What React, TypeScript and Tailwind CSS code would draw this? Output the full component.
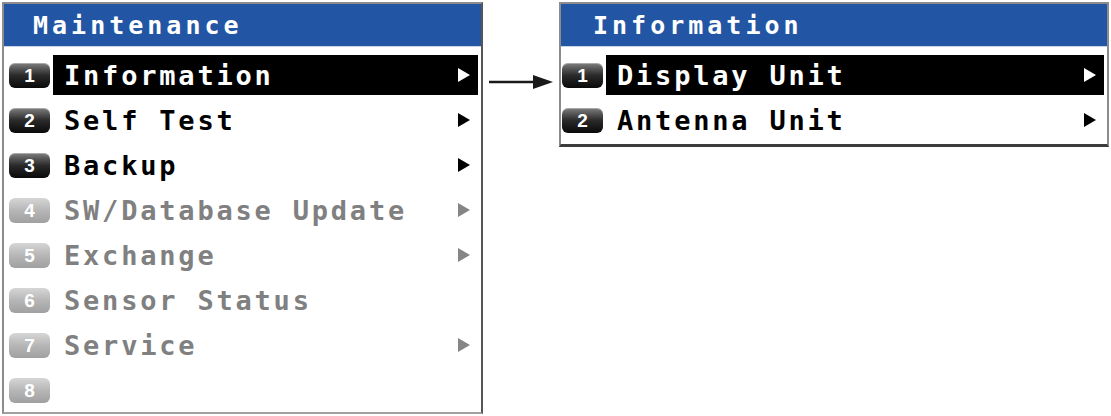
import React from "react";

type Item = { n: number; label: string; sub?: boolean; selected?: boolean; disabled?: boolean };

const mainItems: Item[] = [
  { n: 1, label: "Information", sub: true, selected: true },
  { n: 2, label: "Self Test", sub: true },
  { n: 3, label: "Backup", sub: true },
  { n: 4, label: "SW/Database Update", sub: true, disabled: true },
  { n: 5, label: "Exchange", sub: true, disabled: true },
  { n: 6, label: "Sensor Status", disabled: true },
  { n: 7, label: "Service", sub: true, disabled: true },
  { n: 8, label: "", disabled: true },
];

const infoItems: Item[] = [
  { n: 1, label: "Display Unit", sub: true, selected: true },
  { n: 2, label: "Antenna Unit", sub: true },
];

function Badge({ n, disabled }: { n: number; disabled?: boolean }) {
  return (
    <div
      className={
        "flex h-[25px] w-[41px] shrink-0 items-center justify-center rounded-[6px] font-['Liberation_Sans',Arial,sans-serif] text-[19px] font-bold leading-none text-white " +
        (disabled
          ? "bg-gradient-to-b from-[#d6d6d6] via-[#b6b6b6] to-[#a0a0a0]"
          : "bg-gradient-to-b from-[#808080] via-[#2a2a2a] to-[#0a0a0a] shadow-[inset_0_1px_0_rgba(255,255,255,0.35)]")
      }
    >
      {n}
    </div>
  );
}

function Caret({ color }: { color: string }) {
  return (
    <svg width="12" height="14" viewBox="0 0 12 14" className="shrink-0">
      <polygon points="0,0 12,7 0,14" fill={color} />
    </svg>
  );
}

function Row({ item }: { item: Item }) {
  const textColor = item.selected ? "text-white" : item.disabled ? "text-[#808080]" : "text-black";
  const caretColor = item.selected ? "#ffffff" : item.disabled ? "#858585" : "#000000";
  return (
    <div className="flex h-[40px] items-center">
      <Badge n={item.n} disabled={item.disabled} />
      <div
        className={
          "ml-[3px] flex h-full flex-1 items-center justify-between pl-[11px] pr-[8px] " +
          (item.selected ? "bg-black" : "")
        }
      >
        <span
          className={
            "whitespace-pre font-['DejaVu_Sans_Mono',monospace] text-[27px] font-bold leading-none tracking-[2.8px] " +
            textColor
          }
        >
          {item.label}
        </span>
        {item.sub && <Caret color={caretColor} />}
      </div>
    </div>
  );
}

function Panel({
  title,
  items,
  className,
  titleClass,
  listClass,
}: {
  title: string;
  items: Item[];
  className: string;
  titleClass: string;
  listClass: string;
}) {
  return (
    <div className={"flex flex-col border-2 border-[#8c8c8c] bg-white " + className}>
      <div className={"flex h-[42px] items-center bg-[#2256a4] " + titleClass}>
        <span className="font-['DejaVu_Sans_Mono',monospace] text-[25px] font-bold leading-none tracking-[4px] text-white">
          {title}
        </span>
      </div>
      <div className="h-px bg-[#c9d3e4]" />
      <div className={"flex flex-col gap-[5px] pr-[3px] pt-[8px] " + listClass}>
        {items.map((it) => (
          <Row key={it.n} item={it} />
        ))}
      </div>
    </div>
  );
}

export default function App() {
  return (
    <div className="flex h-[416px] w-[1111px] items-start bg-white pl-[2px] pt-[2px]">
      <Panel
        title="Maintenance"
        items={mainItems}
        titleClass="pl-[29px]"
        listClass="pl-[5px]"
        className="h-[412px] w-[481px] border-r-[#555] border-b-[#a0a0a0]"
      />
      <svg width="76" height="160" viewBox="0 0 76 160" className="shrink-0">
        <line x1="6" y1="80" x2="56" y2="80" stroke="#1a1a1a" strokeWidth="2.4" />
        <polygon points="50,73 70,80 50,87" fill="#1a1a1a" />
      </svg>
      <Panel
        title="Information"
        items={infoItems}
        titleClass="pl-[32px]"
        listClass="pl-[1px]"
        className="h-[145px] w-[550px] border-b-[3px] border-b-[#3c3c3c]"
      />
    </div>
  );
}
